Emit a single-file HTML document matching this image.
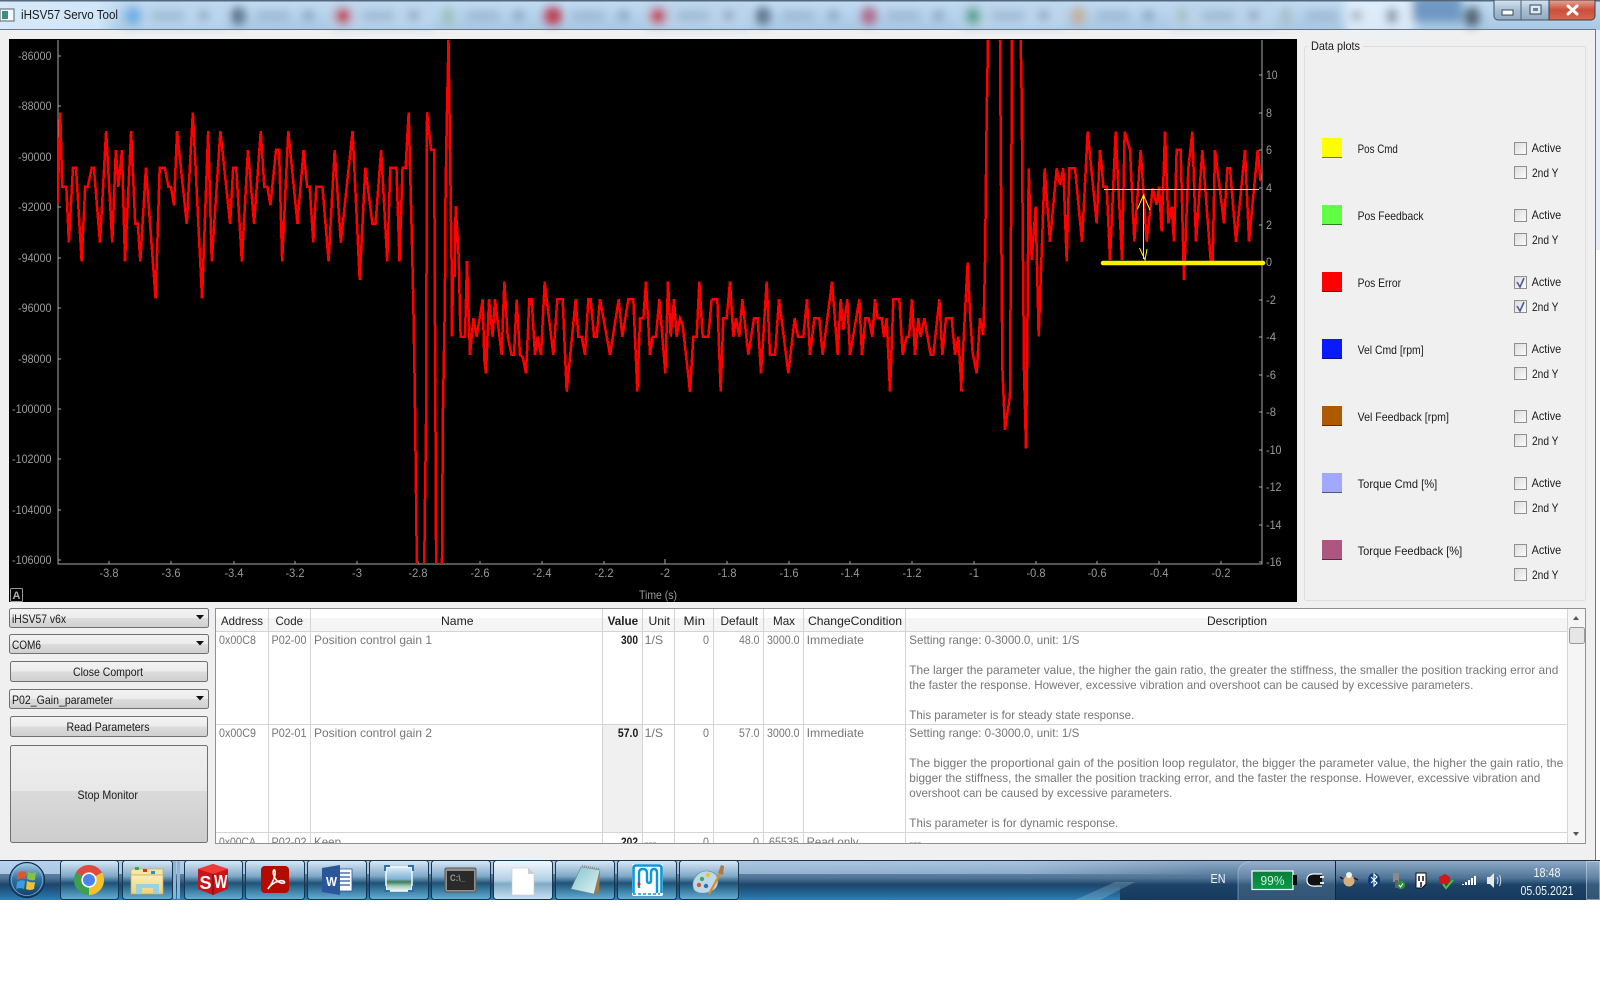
<!DOCTYPE html>
<html lang="en">
<head>
<meta charset="utf-8">
<title>iHSV57 Servo Tool</title>
<style>
html,body{margin:0;padding:0;background:#fff;width:1600px;height:996px;overflow:hidden}
svg{display:block;font-family:"Liberation Sans",sans-serif;font-size:12px}
.c{fill:#9a9a9a}
.t{fill:#767676}
.k{fill:#1a1a1a}
.h{fill:#222}
.m{text-anchor:middle}
.e{text-anchor:end}
.btn{fill:url(#gBtn);stroke:#6e7276;stroke-width:1}
.tb{fill:url(#gGlass);stroke:#163650;stroke-width:1}
.red{fill:none;stroke:#ff0000;stroke-width:2.5;vector-effect:non-scaling-stroke;shape-rendering:crispEdges;stroke-linejoin:miter}
.ax{stroke:#a8a8a8;stroke-width:1;fill:none;shape-rendering:crispEdges}
.cb{fill:url(#gCb);stroke:#8e8f8f;stroke-width:1}
.g{stroke:#d4d4d4;stroke-width:1;fill:none;shape-rendering:crispEdges}
</style>
</head>
<body>
<svg xmlns="http://www.w3.org/2000/svg" width="1600" height="996" viewBox="0 0 1600 996">
<defs>
<linearGradient id="gBtn" x1="0" y1="0" x2="0" y2="1"><stop offset="0" stop-color="#f3f3f3"/><stop offset=".5" stop-color="#ececec"/><stop offset=".5" stop-color="#dddddd"/><stop offset="1" stop-color="#cfcfcf"/></linearGradient>
<linearGradient id="gGlass" x1="0" y1="0" x2="0" y2="1"><stop offset="0" stop-color="#dbe9f6"/><stop offset=".4" stop-color="#7fa9c8"/><stop offset=".58" stop-color="#1f5377"/><stop offset="1" stop-color="#62b1d8"/></linearGradient>
<linearGradient id="gGlassW" x1="0" y1="0" x2="0" y2="1"><stop offset="0" stop-color="#f5fafe"/><stop offset=".5" stop-color="#b3cfe4"/><stop offset=".6" stop-color="#80a9c6"/><stop offset="1" stop-color="#c8e4f4"/></linearGradient>
<linearGradient id="gCb" x1="0" y1="0" x2="1" y2="1"><stop offset="0" stop-color="#dcdcdc"/><stop offset="1" stop-color="#fbfbfb"/></linearGradient>
<linearGradient id="gTitle" x1="0" y1="0" x2="0" y2="1"><stop offset="0" stop-color="#c2dcf3"/><stop offset="1" stop-color="#a8c8e4"/></linearGradient>
<linearGradient id="gTitleL" x1="0" y1="0" x2="1" y2="0"><stop offset="0" stop-color="#d6e9fa"/><stop offset=".8" stop-color="#d0e6f9"/><stop offset="1" stop-color="#d0e6f9" stop-opacity="0"/></linearGradient>
<linearGradient id="gTask" x1="0" y1="0" x2="0" y2="1"><stop offset="0" stop-color="#91adc9"/><stop offset=".45" stop-color="#4f7396"/><stop offset=".62" stop-color="#1c4468"/><stop offset="1" stop-color="#17395c"/></linearGradient>
<linearGradient id="gTaskT" x1="0" y1="0" x2="1" y2="0"><stop offset="0" stop-color="#c6e0fa" stop-opacity=".75"/><stop offset=".85" stop-color="#c6e0fa" stop-opacity=".45"/><stop offset="1" stop-color="#c6e0fa" stop-opacity="0"/></linearGradient>
<linearGradient id="gFadeB" x1="0" y1="0" x2="0" y2="1"><stop offset="0" stop-color="#2c84bd" stop-opacity="0"/><stop offset="1" stop-color="#2c84bd"/></linearGradient>
<linearGradient id="gClose" x1="0" y1="0" x2="0" y2="1"><stop offset="0" stop-color="#e8a594"/><stop offset=".5" stop-color="#c9503c"/><stop offset="1" stop-color="#d9664d"/></linearGradient>
<linearGradient id="gWin" x1="0" y1="0" x2="0" y2="1"><stop offset="0" stop-color="#d6e5f2"/><stop offset=".5" stop-color="#a8bed2"/><stop offset="1" stop-color="#93abc2"/></linearGradient>
<linearGradient id="gBat" x1="0" y1="0" x2="0" y2="1"><stop offset="0" stop-color="#0f7a3c"/><stop offset="1" stop-color="#0a9a48"/></linearGradient>
<linearGradient id="gOrb" x1="0" y1="0" x2="0" y2="1"><stop offset="0" stop-color="#a9cce6"/><stop offset=".5" stop-color="#2c6e9d"/><stop offset="1" stop-color="#0c3d66"/></linearGradient>
<linearGradient id="gSky" x1="0" y1="0" x2="0" y2="1"><stop offset="0" stop-color="#dcecf8"/><stop offset=".5" stop-color="#7fb2d8"/><stop offset=".62" stop-color="#3f7d58"/><stop offset=".8" stop-color="#a7cfc0"/><stop offset="1" stop-color="#eef6fa"/></linearGradient>
<linearGradient id="gNote" x1="0" y1="0" x2="1" y2="1"><stop offset="0" stop-color="#7fc4cd"/><stop offset="1" stop-color="#e6f3f4"/></linearGradient>
<linearGradient id="gFold" x1="0" y1="0" x2="0" y2="1"><stop offset="0" stop-color="#fbeeb4"/><stop offset="1" stop-color="#edd27c"/></linearGradient>
<linearGradient id="gStop" x1="0" y1="0" x2="0" y2="1"><stop offset="0" stop-color="#efefef"/><stop offset=".47" stop-color="#e8e8e8"/><stop offset=".47" stop-color="#dadada"/><stop offset="1" stop-color="#cdcdcd"/></linearGradient>
<clipPath id="cPlot"><rect x="58" y="40" width="1204" height="524"/></clipPath>
<clipPath id="cTable"><rect x="216" y="609" width="1369" height="234"/></clipPath>
<filter id="bl" x="-5%" y="-50%" width="110%" height="200%"><feGaussianBlur stdDeviation="4.5"/></filter>
</defs>

<!-- page / window -->
<rect width="1600" height="996" fill="#ffffff"/>
<rect x="0" y="30" width="1596" height="830" fill="#f0f0f0"/>
<rect x="1596" y="30" width="4" height="220" fill="#e6eff8"/>
<rect x="1595" y="30" width="1" height="830" fill="#6d7a86"/>

<!-- title bar -->
<rect x="0" y="0" width="1600" height="30" fill="url(#gTitle)"/>
<g filter="url(#bl)" opacity=".8">
<rect x="122" y="2" width="105" height="27" fill="#bcd7ee"/>
<rect x="330" y="2" width="105" height="27" fill="#bdd6ec"/>
<rect x="645" y="2" width="105" height="27" fill="#bcd4ea"/>
<rect x="960" y="2" width="105" height="27" fill="#bdd6ec"/>
<rect x="1170" y="2" width="105" height="27" fill="#bcd4ea"/>
<rect x="1345" y="-4" width="70" height="38" fill="#e8f2fb"/>
<rect x="1412" y="-4" width="50" height="26" fill="#5b8ab8"/>
<ellipse cx="133" cy="16" rx="9" ry="10" fill="#5ca7e2"/>
<ellipse cx="238" cy="16" rx="8" ry="9" fill="#4e6074"/>
<ellipse cx="343" cy="16" rx="9" ry="9" fill="#c2182c"/>
<ellipse cx="448" cy="16" rx="5" ry="9" fill="#8fbc9a"/>
<ellipse cx="553" cy="16" rx="9" ry="9" fill="#c2182c"/>
<ellipse cx="658" cy="16" rx="9" ry="9" fill="#c2182c"/>
<ellipse cx="763" cy="16" rx="8" ry="9" fill="#4e6074"/>
<ellipse cx="869" cy="16" rx="8" ry="9" fill="#b05070"/>
<ellipse cx="973" cy="16" rx="8" ry="9" fill="#2f9a74"/>
<ellipse cx="1078" cy="16" rx="8" ry="9" fill="#c8a88c"/>
<ellipse cx="1182" cy="16" rx="5" ry="9" fill="#a4b8b4"/>
<ellipse cx="1286" cy="16" rx="5" ry="9" fill="#a4b8b4"/>
<ellipse cx="1392" cy="16" rx="6" ry="8" fill="#6a8098"/>
<ellipse cx="1472" cy="17" rx="8" ry="10" fill="#3e4a52"/>
<g fill="#9ab4cc">
<rect x="152" y="11" width="32" height="10"/><rect x="257" y="11" width="32" height="10"/><rect x="362" y="11" width="32" height="10"/><rect x="467" y="11" width="32" height="10"/><rect x="572" y="11" width="32" height="10"/><rect x="677" y="11" width="32" height="10"/><rect x="782" y="11" width="32" height="10"/><rect x="887" y="11" width="32" height="10"/><rect x="992" y="11" width="32" height="10"/><rect x="1097" y="11" width="32" height="10"/><rect x="1202" y="11" width="32" height="10"/><rect x="1306" y="11" width="32" height="10"/>
</g>
<g fill="#7a90a6">
<rect x="199" y="11" width="9" height="9"/><rect x="304" y="11" width="9" height="9"/><rect x="409" y="11" width="9" height="9"/><rect x="514" y="11" width="9" height="9"/><rect x="619" y="11" width="9" height="9"/><rect x="724" y="11" width="9" height="9"/><rect x="829" y="11" width="9" height="9"/><rect x="934" y="11" width="9" height="9"/><rect x="1039" y="11" width="9" height="9"/><rect x="1144" y="11" width="9" height="9"/><rect x="1249" y="11" width="9" height="9"/><rect x="1352" y="11" width="9" height="9"/>
</g>
</g>
<rect x="0" y="1" width="122" height="28" fill="url(#gTitleL)"/>
<rect x="0" y="0" width="1600" height="1.5" fill="#55677a"/>
<rect x="0" y="29" width="1596" height="1" fill="#6a7885"/>
<rect x="0" y="9" width="14" height="12" fill="#f4f8fb" stroke="#55626e"/>
<rect x="2" y="11" width="6" height="8" fill="#3f8f7c"/>
<text x="21" y="19" class="k" font-size="13" textLength="97" lengthAdjust="spacingAndGlyphs">iHSV57 Servo Tool</text>

<!-- caption buttons -->
<path d="M1494 0V16a4 4 0 0 0 4 4H1549V0Z" fill="url(#gWin)" stroke="#3f5366"/>
<line x1="1521" y1="0" x2="1521" y2="20" stroke="#4e6276"/>
<path d="M1549 0V20H1591a4 4 0 0 0 4-4V0Z" fill="url(#gClose)" stroke="#3f4048"/>
<rect x="1502" y="10" width="11" height="5" fill="#fff" stroke="#39495a"/>
<rect x="1530" y="5" width="11" height="9" fill="#dfe9f2" stroke="#39495a"/>
<rect x="1533" y="8" width="5" height="3" fill="#6f8396"/>
<path d="M1568 6L1577 14M1577 6L1568 14" stroke="#fff" stroke-width="3" stroke-linecap="round"/>

<!-- plot -->
<rect x="9" y="39" width="1288" height="563" fill="#000"/>
<g class="ax">
<path d="M58 40V564H1262V40"/>
<path d="M58 56h3M58 106h3M58 157h3M58 207h3M58 258h3M58 308h3M58 359h3M58 409h3M58 459h3M58 510h3M58 560h3"/>
<path d="M109 564v-3M171 564v-3M234 564v-3M295 564v-3M357 564v-3M418 564v-3M480 564v-3M542 564v-3M604 564v-3M665 564v-5M727 564v-3M789 564v-3M850 564v-3M912 564v-3M974 564v-3M1036 564v-3M1097 564v-3M1159 564v-3M1221 564v-3"/>
<path d="M1262 75h-3M1262 113h-3M1262 150h-3M1262 188h-3M1262 225h-3M1262 262h-3M1262 300h-3M1262 337h-3M1262 375h-3M1262 412h-3M1262 450h-3M1262 487h-3M1262 525h-3M1262 562h-3"/>
</g>
<g class="c">
<text x="18" y="60" textLength="33.5" lengthAdjust="spacingAndGlyphs">-86000</text>
<text x="18" y="110" textLength="33.5" lengthAdjust="spacingAndGlyphs">-88000</text>
<text x="18" y="161" textLength="33.5" lengthAdjust="spacingAndGlyphs">-90000</text>
<text x="18" y="211" textLength="33.5" lengthAdjust="spacingAndGlyphs">-92000</text>
<text x="18" y="262" textLength="33.5" lengthAdjust="spacingAndGlyphs">-94000</text>
<text x="18" y="312" textLength="33.5" lengthAdjust="spacingAndGlyphs">-96000</text>
<text x="18" y="363" textLength="33.5" lengthAdjust="spacingAndGlyphs">-98000</text>
<text x="12" y="413" textLength="39.5" lengthAdjust="spacingAndGlyphs">-100000</text>
<text x="12" y="463" textLength="39.5" lengthAdjust="spacingAndGlyphs">-102000</text>
<text x="12" y="514" textLength="39.5" lengthAdjust="spacingAndGlyphs">-104000</text>
<text x="12" y="564" textLength="39.5" lengthAdjust="spacingAndGlyphs">-106000</text>
<text x="1266" y="79" textLength="11.5" lengthAdjust="spacingAndGlyphs">10</text>
<text x="1266" y="117" textLength="6" lengthAdjust="spacingAndGlyphs">8</text>
<text x="1266" y="154" textLength="6" lengthAdjust="spacingAndGlyphs">6</text>
<text x="1266" y="192" textLength="6" lengthAdjust="spacingAndGlyphs">4</text>
<text x="1266" y="229" textLength="6" lengthAdjust="spacingAndGlyphs">2</text>
<text x="1266" y="266" textLength="6" lengthAdjust="spacingAndGlyphs">0</text>
<text x="1266" y="304" textLength="10" lengthAdjust="spacingAndGlyphs">-2</text>
<text x="1266" y="341" textLength="10" lengthAdjust="spacingAndGlyphs">-4</text>
<text x="1266" y="379" textLength="10" lengthAdjust="spacingAndGlyphs">-6</text>
<text x="1266" y="416" textLength="10" lengthAdjust="spacingAndGlyphs">-8</text>
<text x="1266" y="454" textLength="15.5" lengthAdjust="spacingAndGlyphs">-10</text>
<text x="1266" y="491" textLength="15.5" lengthAdjust="spacingAndGlyphs">-12</text>
<text x="1266" y="529" textLength="15.5" lengthAdjust="spacingAndGlyphs">-14</text>
<text x="1266" y="566" textLength="15.5" lengthAdjust="spacingAndGlyphs">-16</text>
<g class="m">
<text x="109" y="577" textLength="19" lengthAdjust="spacingAndGlyphs">-3.8</text>
<text x="171" y="577" textLength="19" lengthAdjust="spacingAndGlyphs">-3.6</text>
<text x="234" y="577" textLength="19" lengthAdjust="spacingAndGlyphs">-3.4</text>
<text x="295" y="577" textLength="19" lengthAdjust="spacingAndGlyphs">-3.2</text>
<text x="357" y="577" textLength="10" lengthAdjust="spacingAndGlyphs">-3</text>
<text x="418" y="577" textLength="19" lengthAdjust="spacingAndGlyphs">-2.8</text>
<text x="480" y="577" textLength="19" lengthAdjust="spacingAndGlyphs">-2.6</text>
<text x="542" y="577" textLength="19" lengthAdjust="spacingAndGlyphs">-2.4</text>
<text x="604" y="577" textLength="19" lengthAdjust="spacingAndGlyphs">-2.2</text>
<text x="665" y="577" textLength="10" lengthAdjust="spacingAndGlyphs">-2</text>
<text x="727" y="577" textLength="19" lengthAdjust="spacingAndGlyphs">-1.8</text>
<text x="789" y="577" textLength="19" lengthAdjust="spacingAndGlyphs">-1.6</text>
<text x="850" y="577" textLength="19" lengthAdjust="spacingAndGlyphs">-1.4</text>
<text x="912" y="577" textLength="19" lengthAdjust="spacingAndGlyphs">-1.2</text>
<text x="974" y="577" textLength="10" lengthAdjust="spacingAndGlyphs">-1</text>
<text x="1036" y="577" textLength="19" lengthAdjust="spacingAndGlyphs">-0.8</text>
<text x="1097" y="577" textLength="19" lengthAdjust="spacingAndGlyphs">-0.6</text>
<text x="1159" y="577" textLength="19" lengthAdjust="spacingAndGlyphs">-0.4</text>
<text x="1221" y="577" textLength="19" lengthAdjust="spacingAndGlyphs">-0.2</text>
</g>
<text x="639" y="599" textLength="38" lengthAdjust="spacingAndGlyphs">Time (s)</text>
</g>
<rect x="10.5" y="588.5" width="12" height="13" fill="#000" stroke="#9a9a9a" rx="1"/>
<text x="16.5" y="599" class="m" fill="#b0b0b0" font-size="11" font-weight="bold">A</text>

<g clip-path="url(#cPlot)">
<g transform="scale(.5102 .33333)">
<polyline class="red" points="113,610 118,337 122,560 130,560 135,728 143,503 149,503 160,784 167,560 172,560 180,503 184,503 196,728 208,393 220,728 227,450 232,560 239,450 245,784 257,393 265,672 270,672 275,784 286,503 305,896 313,503 323,503 330,560 335,560 341,616 347,393 366,672 378,337 396,896 408,393 415,784 432,393 451,672 457,503 463,503 474,784 486,450 498,672 511,393 518,560 524,560 530,616 541,450 547,450 553,784 565,393 583,672 595,450 602,560 607,560 614,728 620,560 632,560 644,784 656,450 668,728 691,393 705,840 716,503 730,672 736,672 747,450 759,784 765,503 777,503 783,784 789,503 795,503 801,337 807,700 810,900 813,1170 817,1692 819,1760 831,1760 833,1500 835,1269 837,337 845,450 851,450 853,1100 855,1760 866,1760 868,1250 872,900 873,615 875,420 879,120 883,555 885,780"/>
</g>
<g transform="translate(440 270) scale(.33333)">
<polyline class="red" points="35,-30 36,200 39,18 44,18 47,-192 55,-66 57,0 60,140 62,200 75,200 81,-27 90,255 100,145 110,200 128,88 133,270 138,310 147,88 158,200 165,88 185,255 193,35 203,200 215,255 222,255 230,88 240,255 248,260 258,310 268,88 275,88 285,255 293,200 303,255 314,35 340,255 352,88 368,88 380,365 407,88 415,200 425,200 435,255 445,88 452,88 462,200 470,200 480,88 510,255 536,88 547,200 565,88 580,88 592,365 600,145 610,145 618,35 630,255 638,200 648,200 658,88 676,310 684,35 692,200 702,88 710,200 720,145 728,165 750,365 760,200 770,200 778,35 788,200 805,200 815,88"/>
</g>
<g transform="translate(710 270) scale(.33333)">
<polyline class="red" points="5,88 22,88 32,365 40,145 50,145 60,35 70,200 78,145 88,200 97,88 115,255 132,145 143,145 153,310 170,35 180,255 195,255 207,88 235,310 254,145 264,200 280,200 291,88 300,255 313,145 328,145 338,255 366,35 383,255 392,88 400,180 412,88 420,255 448,88 456,255 466,145 476,145 487,200 495,88 503,145 515,145 522,200 530,145 540,365 550,88 568,88 578,255 590,200 597,200 606,88 615,255 625,145 632,200 643,145 662,255 670,255 688,88 697,255 708,145 725,145 735,255 745,200 755,365"/>
</g>
<g transform="translate(950 30) scale(.33333)">
<polyline class="red" points="33,1085 42,905 53,697 60,850 68,970 80,1030 90,865 100,915 105,700 110,260 114,30 115,-30 150,-30 150,30 152,330 157,1010 165,1200 180,1095 185,265 186,30 187,-30 211,-30 212,30 215,200 218,580 222,1020 228,1255 232,930 236,415 245,690 257,530 266,920 284,415 300,635 320,415 330,465 340,415 350,695 358,415 375,415 396,635 413,305 440,580 450,360 456,420 460,470 470,470 480,690 497,305 516,690 524,305 540,360 553,635 572,360 590,635 608,475 620,525 627,470 635,605 645,305 655,580 665,530 672,635 680,360 692,360 702,750 715,415 727,305 738,635 757,360 782,690 788,690 795,360 822,580 832,415 840,415 858,635 885,360 897,635 923,360 932,455"/>
</g>
</g>
<!-- yellow overlays -->
<line x1="1103" y1="263" x2="1263" y2="263" stroke="#ffef00" stroke-width="4.5" stroke-linecap="round"/>
<line x1="1104" y1="189.5" x2="1259" y2="189.5" stroke="#ffee44" stroke-width="1"/>
<line x1="1143.5" y1="195" x2="1143.5" y2="259" stroke="#ffee22" stroke-width="1"/>
<path d="M1137.5 209L1143.5 195L1150 210" fill="none" stroke="#ffee22" stroke-width="1"/>
<path d="M1139.5 248L1145 260L1147 249" fill="none" stroke="#ffee22" stroke-width="1"/>

<!-- data plots group -->
<rect x="1304.5" y="46.5" width="281" height="554" rx="2" fill="#f0f0f0" stroke="#dadfe3"/>
<rect x="1308" y="40" width="55" height="12" fill="#f0f0f0"/>
<text x="1311" y="50" class="k" textLength="49" lengthAdjust="spacingAndGlyphs">Data plots</text>
<g>
<rect x="1322" y="138" width="20" height="20" fill="#ffff00"/><rect x="1322" y="157" width="20" height="1" fill="#7a7a10"/>
<rect x="1322" y="205" width="20" height="20" fill="#5fff44"/><rect x="1322" y="224" width="20" height="1" fill="#2f7f22"/>
<rect x="1322" y="272" width="20" height="20" fill="#ff0000"/><rect x="1322" y="291" width="20" height="1" fill="#7f1010"/>
<rect x="1322" y="339" width="20" height="20" fill="#0a1aff"/><rect x="1322" y="358" width="20" height="1" fill="#0a1080"/>
<rect x="1322" y="406" width="20" height="20" fill="#ad5a00"/><rect x="1322" y="425" width="20" height="1" fill="#5a3000"/>
<rect x="1322" y="473" width="20" height="20" fill="#a0a8ff"/><rect x="1322" y="492" width="20" height="1" fill="#50547f"/>
<rect x="1322" y="540" width="20" height="20" fill="#ad5680"/><rect x="1322" y="559" width="20" height="1" fill="#562b40"/>
</g>
<g class="k">
<text x="1357.6" y="153" textLength="40.3" lengthAdjust="spacingAndGlyphs">Pos Cmd</text>
<text x="1357.6" y="220" textLength="66" lengthAdjust="spacingAndGlyphs">Pos Feedback</text>
<text x="1357.6" y="287" textLength="43.4" lengthAdjust="spacingAndGlyphs">Pos Error</text>
<text x="1357.6" y="354" textLength="66" lengthAdjust="spacingAndGlyphs">Vel Cmd [rpm]</text>
<text x="1357.6" y="421" textLength="91.3" lengthAdjust="spacingAndGlyphs">Vel Feedback [rpm]</text>
<text x="1357.6" y="488" textLength="79.6" lengthAdjust="spacingAndGlyphs">Torque Cmd [%]</text>
<text x="1357.6" y="555" textLength="104.6" lengthAdjust="spacingAndGlyphs">Torque Feedback [%]</text>
<text x="1531.6" y="152" textLength="29.6" lengthAdjust="spacingAndGlyphs">Active</text>
<text x="1532" y="177" textLength="26.5" lengthAdjust="spacingAndGlyphs">2nd Y</text>
<text x="1531.6" y="219" textLength="29.6" lengthAdjust="spacingAndGlyphs">Active</text>
<text x="1532" y="244" textLength="26.5" lengthAdjust="spacingAndGlyphs">2nd Y</text>
<text x="1531.6" y="286" textLength="29.6" lengthAdjust="spacingAndGlyphs">Active</text>
<text x="1532" y="311" textLength="26.5" lengthAdjust="spacingAndGlyphs">2nd Y</text>
<text x="1531.6" y="353" textLength="29.6" lengthAdjust="spacingAndGlyphs">Active</text>
<text x="1532" y="378" textLength="26.5" lengthAdjust="spacingAndGlyphs">2nd Y</text>
<text x="1531.6" y="420" textLength="29.6" lengthAdjust="spacingAndGlyphs">Active</text>
<text x="1532" y="445" textLength="26.5" lengthAdjust="spacingAndGlyphs">2nd Y</text>
<text x="1531.6" y="487" textLength="29.6" lengthAdjust="spacingAndGlyphs">Active</text>
<text x="1532" y="512" textLength="26.5" lengthAdjust="spacingAndGlyphs">2nd Y</text>
<text x="1531.6" y="554" textLength="29.6" lengthAdjust="spacingAndGlyphs">Active</text>
<text x="1532" y="579" textLength="26.5" lengthAdjust="spacingAndGlyphs">2nd Y</text>
</g>
<g class="cb">
<rect x="1514.5" y="142.5" width="12" height="12"/><rect x="1514.5" y="166.5" width="12" height="12"/>
<rect x="1514.5" y="209.5" width="12" height="12"/><rect x="1514.5" y="233.5" width="12" height="12"/>
<rect x="1514.5" y="276.5" width="12" height="12"/><rect x="1514.5" y="300.5" width="12" height="12"/>
<rect x="1514.5" y="343.5" width="12" height="12"/><rect x="1514.5" y="367.5" width="12" height="12"/>
<rect x="1514.5" y="410.5" width="12" height="12"/><rect x="1514.5" y="434.5" width="12" height="12"/>
<rect x="1514.5" y="477.5" width="12" height="12"/><rect x="1514.5" y="501.5" width="12" height="12"/>
<rect x="1514.5" y="544.5" width="12" height="12"/><rect x="1514.5" y="568.5" width="12" height="12"/>
</g>
<path d="M1517 282L1520 287L1524 278M1517 306L1520 311L1524 302" fill="none" stroke="#4a5f9a" stroke-width="1.6"/>

<!-- left controls -->
<rect x="9.5" y="608.5" width="199" height="19" rx="2" class="btn"/>
<rect x="9.5" y="634.5" width="199" height="19" rx="2" class="btn"/>
<rect x="10.5" y="661.5" width="197" height="20" rx="2" class="btn"/>
<rect x="9.5" y="689.5" width="199" height="19" rx="2" class="btn"/>
<rect x="10.5" y="716.5" width="197" height="20" rx="2" class="btn"/>
<rect x="10.5" y="745.5" width="197" height="97" rx="2" fill="url(#gStop)" stroke="#6e7276"/>
<path d="M196 615h8l-4 4.5zM196 641h8l-4 4.5zM196 696h8l-4 4.5z" fill="#111"/>
<g class="k">
<text x="12" y="623" textLength="54" lengthAdjust="spacingAndGlyphs">iHSV57 v6x</text>
<text x="12" y="649" textLength="29" lengthAdjust="spacingAndGlyphs">COM6</text>
<text x="73" y="676" textLength="70" lengthAdjust="spacingAndGlyphs">Close Comport</text>
<text x="12" y="704" textLength="101" lengthAdjust="spacingAndGlyphs">P02_Gain_parameter</text>
<text x="66.5" y="731" textLength="83" lengthAdjust="spacingAndGlyphs">Read Parameters</text>
<text x="77.5" y="799" textLength="60.4" lengthAdjust="spacingAndGlyphs">Stop Monitor</text>
</g>

<!-- table -->
<rect x="215.5" y="608.5" width="1370" height="235" fill="#fff" stroke="#8d9296"/>
<rect x="216" y="609" width="1352" height="9" fill="#ffffff"/>
<rect x="216" y="618" width="1352" height="13" fill="#f5f5f5"/>
<rect x="603" y="725" width="39" height="107" fill="#f0f0f0"/>
<g class="g">
<path d="M268.5 609V843M310.5 609V843M602.5 609V843M642.5 609V843M674.5 609V843M713.5 609V843M763.5 609V843M803.5 609V843M905.5 609V843M1567.5 609V843"/>
<path d="M216 631.5H1568M216 724.5H1568M216 832.5H1568"/>
</g>
<g class="h">
<text x="221" y="625" textLength="42" lengthAdjust="spacingAndGlyphs">Address</text>
<text x="275.5" y="625" textLength="27.5" lengthAdjust="spacingAndGlyphs">Code</text>
<text x="441" y="625" textLength="32.5" lengthAdjust="spacingAndGlyphs">Name</text>
<text x="607.6" y="625" font-weight="bold" textLength="30.6" lengthAdjust="spacingAndGlyphs">Value</text>
<text x="648.5" y="625" textLength="21.5" lengthAdjust="spacingAndGlyphs">Unit</text>
<text x="683.5" y="625" textLength="21.5" lengthAdjust="spacingAndGlyphs">Min</text>
<text x="720.5" y="625" textLength="37.5" lengthAdjust="spacingAndGlyphs">Default</text>
<text x="773" y="625" textLength="22" lengthAdjust="spacingAndGlyphs">Max</text>
<text x="808" y="625" textLength="94" lengthAdjust="spacingAndGlyphs">ChangeCondition</text>
<text x="1207" y="625" textLength="60" lengthAdjust="spacingAndGlyphs">Description</text>
</g>
<g clip-path="url(#cTable)">
<g class="t">
<text x="219" y="644" textLength="37" lengthAdjust="spacingAndGlyphs">0x00C8</text>
<text x="271.5" y="644" textLength="35" lengthAdjust="spacingAndGlyphs">P02-00</text>
<text x="314" y="644" textLength="118" lengthAdjust="spacingAndGlyphs">Position control gain 1</text>
<text x="644.6" y="644" textLength="18.5" lengthAdjust="spacingAndGlyphs">1/S</text>
<text x="703" y="644" textLength="6" lengthAdjust="spacingAndGlyphs">0</text>
<text x="739" y="644" textLength="20.4" lengthAdjust="spacingAndGlyphs">48.0</text>
<text x="767" y="644" textLength="32.5" lengthAdjust="spacingAndGlyphs">3000.0</text>
<text x="806.6" y="644" textLength="57.4" lengthAdjust="spacingAndGlyphs">Immediate</text>
<text x="909.3" y="644" textLength="170" lengthAdjust="spacingAndGlyphs">Setting range: 0-3000.0, unit: 1/S</text>
<text x="909.3" y="674" textLength="649" lengthAdjust="spacingAndGlyphs">The larger the parameter value, the higher the gain ratio, the greater the stiffness, the smaller the position tracking error and</text>
<text x="909.3" y="689" textLength="564" lengthAdjust="spacingAndGlyphs">the faster the response. However, excessive vibration and overshoot can be caused by excessive parameters.</text>
<text x="909.3" y="719" textLength="225" lengthAdjust="spacingAndGlyphs">This parameter is for steady state response.</text>

<text x="219" y="737" textLength="37" lengthAdjust="spacingAndGlyphs">0x00C9</text>
<text x="271.5" y="737" textLength="35" lengthAdjust="spacingAndGlyphs">P02-01</text>
<text x="314" y="737" textLength="118" lengthAdjust="spacingAndGlyphs">Position control gain 2</text>
<text x="644.6" y="737" textLength="18.5" lengthAdjust="spacingAndGlyphs">1/S</text>
<text x="703" y="737" textLength="6" lengthAdjust="spacingAndGlyphs">0</text>
<text x="739" y="737" textLength="20.4" lengthAdjust="spacingAndGlyphs">57.0</text>
<text x="767" y="737" textLength="32.5" lengthAdjust="spacingAndGlyphs">3000.0</text>
<text x="806.6" y="737" textLength="57.4" lengthAdjust="spacingAndGlyphs">Immediate</text>
<text x="909.3" y="737" textLength="170" lengthAdjust="spacingAndGlyphs">Setting range: 0-3000.0, unit: 1/S</text>
<text x="909.3" y="767" textLength="654" lengthAdjust="spacingAndGlyphs">The bigger the proportional gain of the position loop regulator, the bigger the parameter value, the higher the gain ratio, the</text>
<text x="909.3" y="782" textLength="631" lengthAdjust="spacingAndGlyphs">bigger the stiffness, the smaller the position tracking error, and the faster the response. However, excessive vibration and</text>
<text x="909.3" y="797" textLength="263" lengthAdjust="spacingAndGlyphs">overshoot can be caused by excessive parameters.</text>
<text x="909.3" y="827" textLength="209" lengthAdjust="spacingAndGlyphs">This parameter is for dynamic response.</text>

<text x="219" y="846" textLength="37" lengthAdjust="spacingAndGlyphs">0x00CA</text>
<text x="271.5" y="846" textLength="35" lengthAdjust="spacingAndGlyphs">P02-02</text>
<text x="314" y="846" textLength="27" lengthAdjust="spacingAndGlyphs">Keep</text>
<text x="644.6" y="846">---</text>
<text x="703" y="846" textLength="6" lengthAdjust="spacingAndGlyphs">0</text>
<text x="753" y="846" textLength="6" lengthAdjust="spacingAndGlyphs">0</text>
<text x="769" y="846" textLength="30" lengthAdjust="spacingAndGlyphs">65535</text>
<text x="806.6" y="846" textLength="52" lengthAdjust="spacingAndGlyphs">Read only</text>
<text x="909.3" y="846">---</text>
</g>
<g class="k" font-weight="bold">
<text x="621" y="644" textLength="17" lengthAdjust="spacingAndGlyphs">300</text>
<text x="617.9" y="737" textLength="20.4" lengthAdjust="spacingAndGlyphs">57.0</text>
<text x="621" y="846" textLength="17" lengthAdjust="spacingAndGlyphs">202</text>
</g>
</g>
<!-- scrollbar -->
<rect x="1568" y="609" width="17" height="234" fill="#f5f5f5"/>
<rect x="1569.5" y="627.5" width="15" height="16" rx="2" fill="#e6e6e6" stroke="#9a9a9a"/>
<path d="M1573 620l3-4 3 4zM1573 832l3 4 3-4z" fill="#555"/>

<!-- taskbar -->
<rect x="0" y="860" width="1600" height="40" fill="url(#gTask)"/>
<rect x="0" y="884" width="1120" height="16" fill="url(#gFadeB)" opacity=".95"/>
<rect x="0" y="860" width="1210" height="14" fill="url(#gTaskT)"/>
<rect x="0" y="860" width="1600" height="1" fill="#1f3347"/>
<path d="M1075 900L1115 882L1135 882L1100 900Z" fill="#cfe6f7" opacity=".22"/>

<!-- start orb -->
<circle cx="27" cy="880" r="17.5" fill="url(#gOrb)" stroke="#0f2f4d" stroke-width="1.2"/>
<circle cx="27" cy="880" r="15.5" fill="none" stroke="#9fc6e2" stroke-width=".7" opacity=".8"/>
<g transform="translate(27 880)">
<path d="M-9 -7Q-5 -10 -1 -8L-2 -1Q-6 -3 -10 0Z" fill="#e0542e"/>
<path d="M1 -8Q5 -6 9 -8L8 0Q4 1 0 -1Z" fill="#86c23c"/>
<path d="M-10 2Q-6 -1 -2 1L-3 9Q-7 7 -11 9Z" fill="#3f9be0"/>
<path d="M0 1Q4 3 8 2L7 9Q3 11 -1 9Z" fill="#f5c02e"/>
</g>

<!-- taskbar buttons -->
<rect x="60.5" y="860.5" width="58" height="39" rx="3" class="tb"/>
<rect x="122.5" y="860.5" width="50" height="39" rx="3" class="tb"/>
<rect x="173" y="861" width="3" height="38" rx="1" fill="#8fb4d2"/>
<rect x="177" y="861" width="3" height="38" rx="1" fill="#8fb4d2"/>
<rect x="184.5" y="860.5" width="58" height="39" rx="3" class="tb"/>
<rect x="245.5" y="860.5" width="59" height="39" rx="3" class="tb"/>
<rect x="307.5" y="860.5" width="59" height="39" rx="3" class="tb"/>
<rect x="369.5" y="860.5" width="59" height="39" rx="3" class="tb"/>
<rect x="431.5" y="860.5" width="59" height="39" rx="3" class="tb"/>
<rect x="493.5" y="860.5" width="59" height="39" rx="3" fill="url(#gGlassW)" stroke="#163650"/>
<rect x="555.5" y="860.5" width="59" height="39" rx="3" class="tb"/>
<rect x="617.5" y="860.5" width="59" height="39" rx="3" class="tb"/>
<rect x="679.5" y="860.5" width="59" height="39" rx="3" class="tb"/>

<!-- chrome -->
<g>
<path d="M89 880L76 872.5A15 15 0 0 1 102 872.5Z" fill="#dd4b3e"/>
<path d="M89 880L102 872.5A15 15 0 0 1 89 895Z" fill="#f3c12a"/>
<path d="M89 880L89 895A15 15 0 0 1 76 872.5Z" fill="#3da04f"/>
<circle cx="89" cy="880" r="7.6" fill="#fff"/>
<circle cx="89" cy="880" r="6" fill="#4a86e8"/>
</g>
<!-- explorer -->
<g>
<rect x="131" y="869" width="32" height="6" fill="#f4e5a8" stroke="#c9a95a" stroke-width=".7"/>
<rect x="135" y="867" width="4" height="3" fill="#3aa84a"/><rect x="143" y="869" width="4" height="3" fill="#d03a2a"/><rect x="151" y="871" width="4" height="3" fill="#2a8ed6"/>
<rect x="131" y="875" width="32" height="19" fill="url(#gFold)" stroke="#c9a95a" stroke-width=".7"/>
<path d="M136 894V884H159V894H153V888H142V894Z" fill="#8fd0ea" opacity=".9"/>
</g>
<!-- solidworks -->
<g>
<path d="M213 864L228 869V889L213 895L198 889V869Z" fill="#c8141a"/>
<path d="M213 864L228 869L213 874L198 869Z" fill="#ef3a38"/>
<line x1="213" y1="874" x2="213" y2="895" stroke="#6e0a0e"/>
<text x="199.500" y="889" fill="#fff" font-size="18" font-weight="bold" textLength="12" lengthAdjust="spacingAndGlyphs">S</text>
<text x="214" y="888" fill="#fff" font-size="18" font-weight="bold" textLength="13.500" lengthAdjust="spacingAndGlyphs">W</text>
</g>
<!-- pdf -->
<rect x="261" y="866" width="28" height="27" rx="4" fill="#b30b00"/>
<path d="M268 889C272 884 276 876 275 871C274.500 868 272 871 274 876C276 881 280 884 284 883C286 882 283 880 279 881C275 882 270 885 268 889Z" fill="none" stroke="#fff" stroke-width="1.6"/>
<!-- word -->
<rect x="335" y="869" width="17" height="22" fill="#fff" stroke="#2b579a" stroke-width=".8"/>
<path d="M340 873h10M340 877h10M340 881h10M340 885h10" stroke="#2b579a" stroke-width="1.2"/>
<path d="M322 868L340 865V895L322 892Z" fill="#2b579a"/>
<text x="326" y="886" fill="#fff" font-size="13" font-weight="bold" textLength="11" lengthAdjust="spacingAndGlyphs">W</text>
<!-- image -->
<rect x="386" y="867" width="26" height="24" fill="url(#gSky)" stroke="#f2f7fb" stroke-width="1.5"/>
<path d="M385 871v-5h5M408 866h5v5M413 886v5h-5M390 891h-5v-5" fill="none" stroke="#2a70b0" stroke-width="2"/>
<!-- cmd -->
<rect x="445" y="868" width="31" height="24" rx="1.500" fill="#8f8f8f" stroke="#5a5a5a"/>
<rect x="447" y="871" width="27" height="19" fill="#2a2a2a"/>
<text x="450" y="881" fill="#9a9a9a" font-size="9" font-weight="bold" textLength="15" lengthAdjust="spacingAndGlyphs">C:\_</text>
<!-- file -->
<path d="M512 868H528L534 874V895H512Z" fill="#fff" stroke="#c8c8c8" stroke-width=".6"/>
<path d="M528 868V874H534Z" fill="#cfcfcf"/>
<!-- notepad -->
<path d="M581 867L600 870L594 894L571 889Z" fill="url(#gNote)" stroke="#6a8a90" stroke-width=".6"/>
<path d="M600 870L599 893L594 894Z" fill="#9b7b4a"/>
<path d="M582 866L599 869" stroke="#8a8a8a" stroke-width="2" stroke-dasharray="1 1"/>
<!-- maze -->
<rect x="632" y="864" width="31" height="32" rx="2" fill="#fff"/>
<path d="M633.500 893V868Q633.500 865.500 636 865.500H659Q661.500 865.500 661.500 868V893" fill="none" stroke="#0d96d8" stroke-width="2.6"/>
<path d="M639 888V873Q639 869 643 869Q647 869 647 873V880Q647 883 649 883Q651 883 651 880V873Q651 869 654 869Q657 869 657 873V893" fill="none" stroke="#0d96d8" stroke-width="2.4"/>
<path d="M633 894h27" stroke="#0d96d8" stroke-width="1.600" stroke-dasharray="3 2"/>
<circle cx="639" cy="884" r="1.500" fill="#e02020"/>
<!-- paint -->
<path d="M694 890C690 880 698 870 708 871C716 872 720 878 717 886C714 893 700 896 694 890Z" fill="#bcd9ea" stroke="#6f8fa6" stroke-width=".7"/>
<circle cx="702" cy="879" r="2.200" fill="#3fae4c"/><circle cx="708" cy="875" r="2.200" fill="#f3c12a"/><circle cx="699" cy="885" r="2.200" fill="#d0583a"/><circle cx="706" cy="886" r="2.200" fill="#2c6ec0"/>
<path d="M709 894L720 874" stroke="#e08a1e" stroke-width="2.200"/>
<path d="M718 873L721 865L724 866L723 875Z" fill="#a97a4a"/>

<!-- tray -->
<path d="M1238 900L1238 871Q1240 863 1250 861.5H1335V900Z" fill="#c8dcf0" opacity=".16"/>
<path d="M1238 900L1238 871Q1240 863 1250 861.5" fill="none" stroke="#b8cde0" stroke-width=".7" opacity=".7"/>
<line x1="1335.500" y1="861" x2="1335.500" y2="900" stroke="#10263c"/>
<text x="1218" y="883" class="m" fill="#f0f4f8" font-size="12.500" textLength="15" lengthAdjust="spacingAndGlyphs">EN</text>
<rect x="1252" y="871" width="41" height="18.500" fill="url(#gBat)" stroke="#fff" stroke-width="1.200"/>
<rect x="1293" y="875" width="4" height="10" fill="#0a0a0a"/>
<text x="1272.500" y="885" class="m" fill="#c8f5d8" font-size="12.500" textLength="24" lengthAdjust="spacingAndGlyphs">99%</text>
<!-- plug -->
<path d="M1322 874H1317Q1307 873 1307 880Q1307 887 1317 886H1322" fill="#111" stroke="#fff" stroke-width="1.200"/>
<path d="M1320 877h4M1320 883h4" stroke="#fff" stroke-width="1.800"/>
<!-- tray icons -->
<circle cx="1349" cy="881" r="5.500" fill="#d8b07a"/><circle cx="1349" cy="875" r="3" fill="#f2f2f2"/>
<path d="M1343 879l-3-2M1354 878l4 2" stroke="#1a1a1a" stroke-width="1.500"/>
<ellipse cx="1374" cy="880.500" rx="6" ry="7.500" fill="#0b3c7c"/>
<path d="M1371 877L1377 883L1374 886V874L1377 877L1371 883" fill="none" stroke="#fff" stroke-width="1.100"/>
<rect x="1393" y="873" width="6" height="9" fill="#8b8b8b"/><rect x="1395" y="880" width="3" height="8" fill="#5f5f5f"/>
<circle cx="1401" cy="885" r="4.200" fill="#2f8f3a"/>
<path d="M1399 885l1.500 2 2.500-3.500" stroke="#fff" fill="none" stroke-width="1"/>
<path d="M1416 873H1426V884L1422 888H1416Z" fill="#fff" stroke="#111" stroke-width="1"/>
<path d="M1419 876V881M1423 876V881M1421 882V887" stroke="#111" stroke-width="1.500"/>
<path d="M1439 877L1445 874L1450 877V883L1445 885L1439 883Z" fill="#c81c1c"/>
<path d="M1443 884L1446 888L1453 880" fill="none" stroke="#3fc83f" stroke-width="2"/>
<path d="M1463 885v-1M1466 885v-3M1469 885v-5M1472 885v-7M1475 885v-9" stroke="#fff" stroke-width="2"/>
<path d="M1487 877H1490L1494 873V888L1490 884H1487Z" fill="#e8e8e8"/>
<path d="M1497 877Q1499 880.500 1497 884M1499.500 875Q1502 880.500 1499.500 886" fill="none" stroke="#d0d8e0"/>
<text x="1547" y="877" class="m" fill="#f0f4f8" font-size="12.500" textLength="27" lengthAdjust="spacingAndGlyphs">18:48</text>
<text x="1547" y="895" class="m" fill="#f0f4f8" font-size="12.500" textLength="53" lengthAdjust="spacingAndGlyphs">05.05.2021</text>
<rect x="1586.500" y="861.500" width="13" height="38" fill="#b7cde0" fill-opacity=".18" stroke="#cfe0ee" stroke-opacity=".55"/>
</svg>
</body>
</html>
